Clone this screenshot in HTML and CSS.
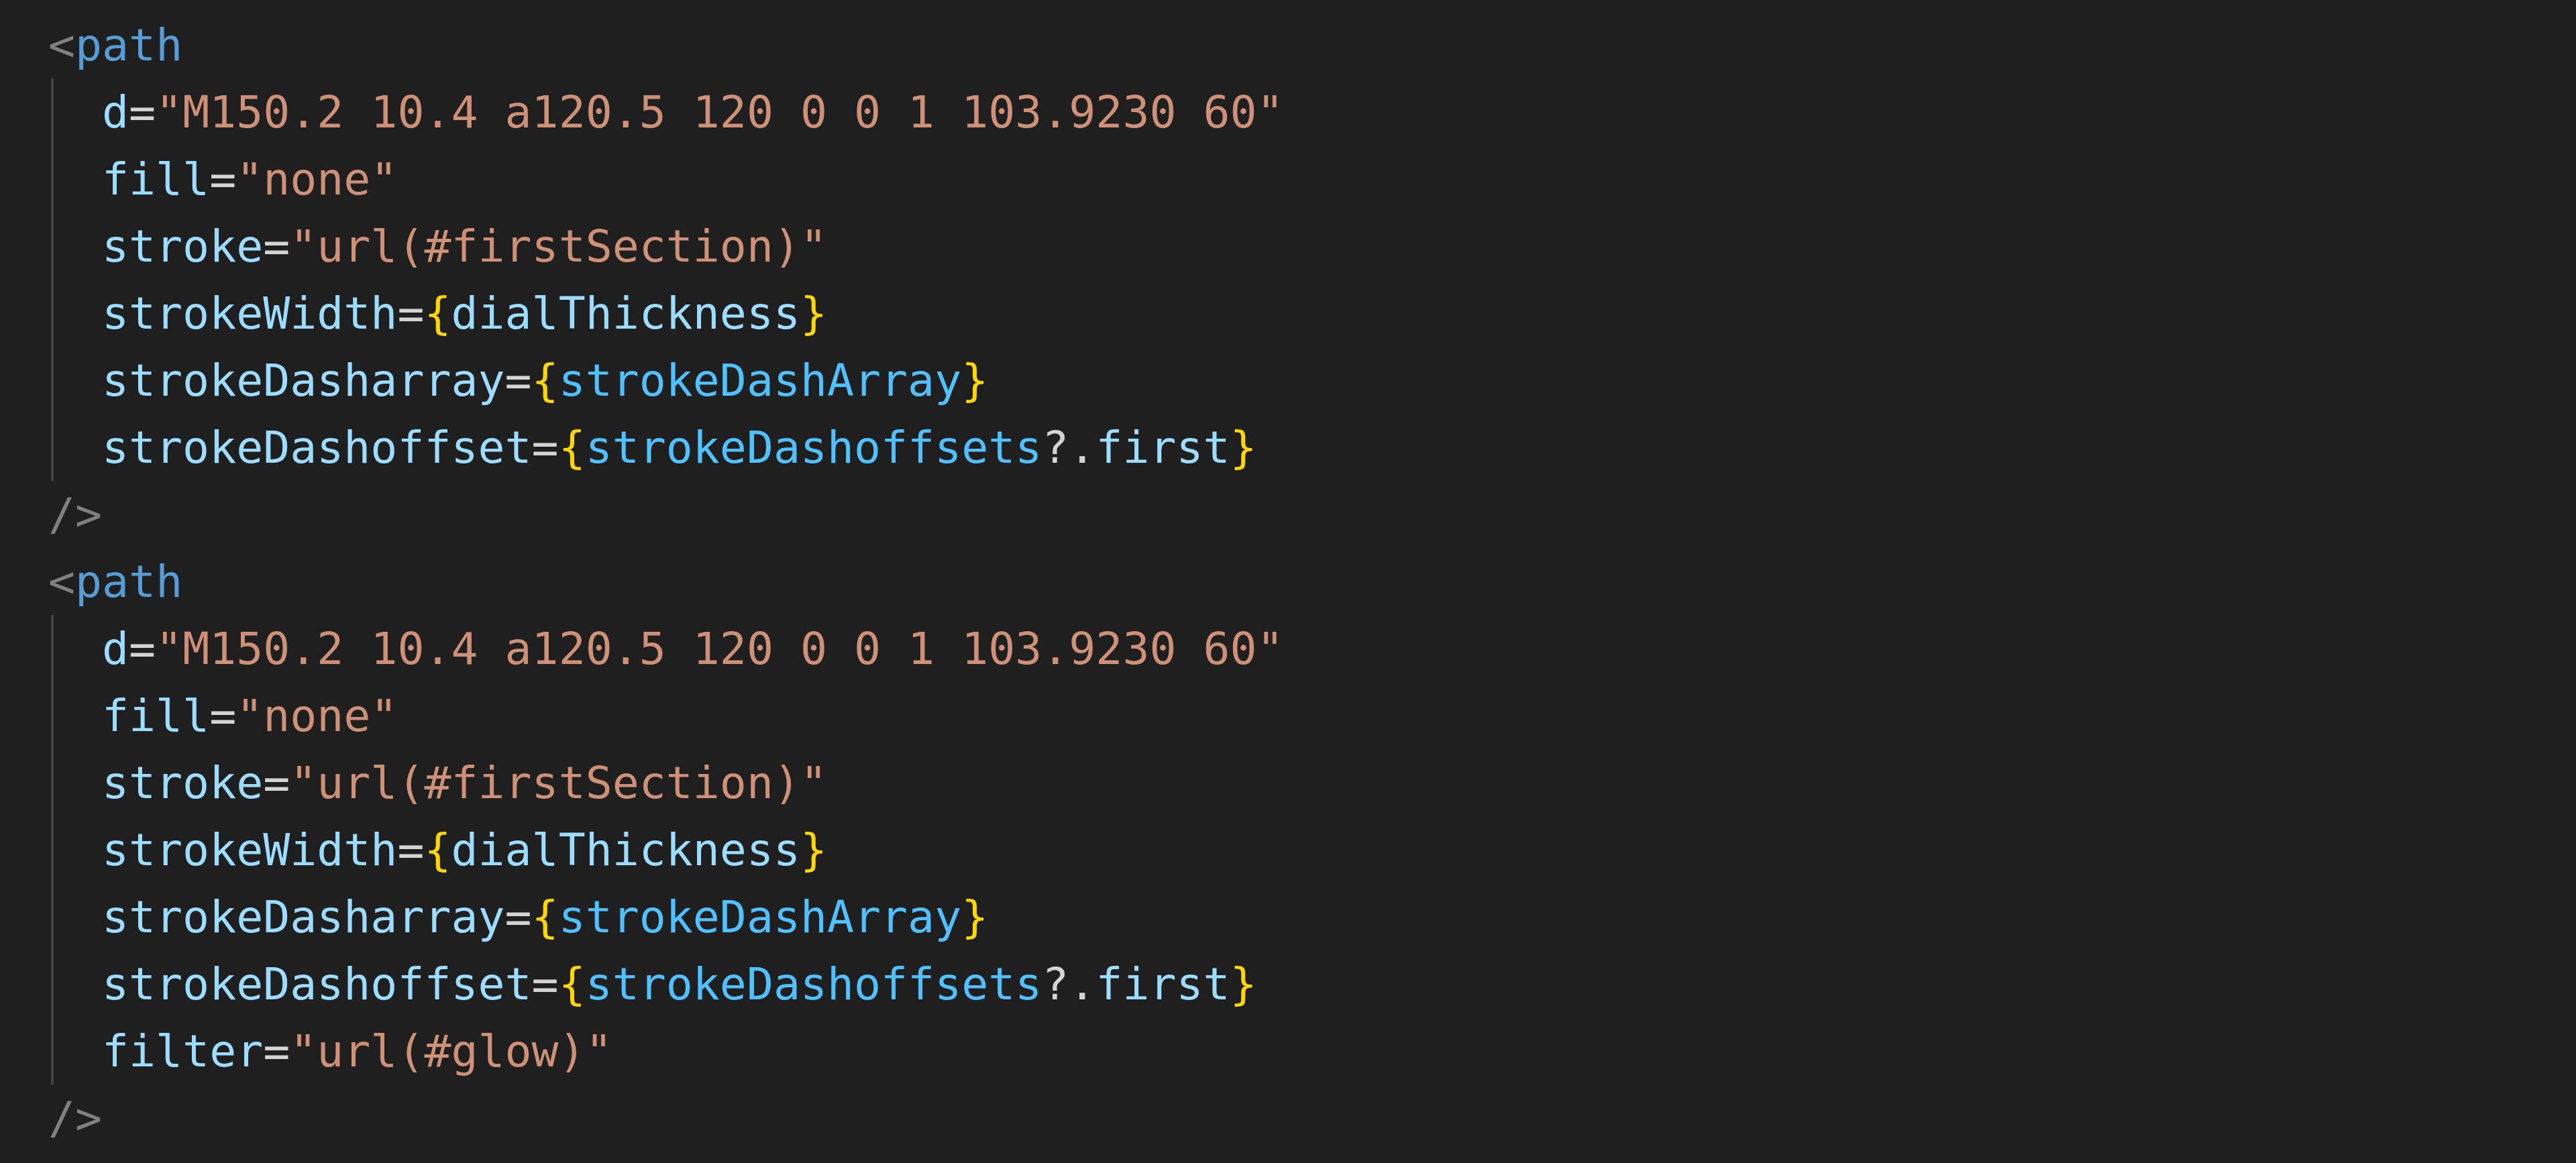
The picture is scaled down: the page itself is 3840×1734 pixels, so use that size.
FILE: index.html
```html
<!DOCTYPE html>
<html lang="en">
<head>
<meta charset="utf-8">
<title>Code</title>
<link rel="stylesheet" href="styles.css">
</head>
<body>
<div class="code">
  <div class="line"><span class="pn">&lt;</span><span class="tag">path</span></div>
  <div class="attrs">
    <div class="line"><span class="at">d</span><span class="op">=</span><span class="str">"M150.2 10.4 a120.5 120 0 0 1 103.9230 60"</span></div>
    <div class="line"><span class="at">fill</span><span class="op">=</span><span class="str">"none"</span></div>
    <div class="line"><span class="at">stroke</span><span class="op">=</span><span class="str">"url(#firstSection)"</span></div>
    <div class="line"><span class="at">strokeWidth</span><span class="op">=</span><span class="br">{</span><span class="at">dialThickness</span><span class="br">}</span></div>
    <div class="line"><span class="at">strokeDasharray</span><span class="op">=</span><span class="br">{</span><span class="cn">strokeDashArray</span><span class="br">}</span></div>
    <div class="line"><span class="at">strokeDashoffset</span><span class="op">=</span><span class="br">{</span><span class="cn">strokeDashoffsets</span><span class="op">?.</span><span class="at">first</span><span class="br">}</span></div>
  </div>
  <div class="line"><span class="pn">/&gt;</span></div>
  <div class="line"><span class="pn">&lt;</span><span class="tag">path</span></div>
  <div class="attrs">
    <div class="line"><span class="at">d</span><span class="op">=</span><span class="str">"M150.2 10.4 a120.5 120 0 0 1 103.9230 60"</span></div>
    <div class="line"><span class="at">fill</span><span class="op">=</span><span class="str">"none"</span></div>
    <div class="line"><span class="at">stroke</span><span class="op">=</span><span class="str">"url(#firstSection)"</span></div>
    <div class="line"><span class="at">strokeWidth</span><span class="op">=</span><span class="br">{</span><span class="at">dialThickness</span><span class="br">}</span></div>
    <div class="line"><span class="at">strokeDasharray</span><span class="op">=</span><span class="br">{</span><span class="cn">strokeDashArray</span><span class="br">}</span></div>
    <div class="line"><span class="at">strokeDashoffset</span><span class="op">=</span><span class="br">{</span><span class="cn">strokeDashoffsets</span><span class="op">?.</span><span class="at">first</span><span class="br">}</span></div>
    <div class="line"><span class="at">filter</span><span class="op">=</span><span class="str">"url(#glow)"</span></div>
  </div>
  <div class="line"><span class="pn">/&gt;</span></div>
</div>
</body>
</html>
```

FILE: styles.css
```css
html, body {
  margin: 0;
  padding: 0;
  background: #1f1f1f;
}
body {
  width: 3840px;
  height: 1734px;
  overflow: hidden;
}
.code {
  padding: 17px 0 0 72px;
  font-family: "DejaVu Sans Mono", "Liberation Mono", monospace;
  font-size: 66.5px;
  line-height: 100px;
  color: #d4d4d4;
}
.line {
  height: 100px;
  white-space: pre;
}
.attrs {
  margin-left: 4px;
  border-left: 4px solid #444444;
  padding-left: 72px;
}
.pn { color: #808080; }
.tag { color: #569cd6; }
.at { color: #9cdcfe; }
.op { color: #d4d4d4; }
.str { color: #ce9178; }
.br { color: #ffd700; }
.cn { color: #4fc1ff; }
```
